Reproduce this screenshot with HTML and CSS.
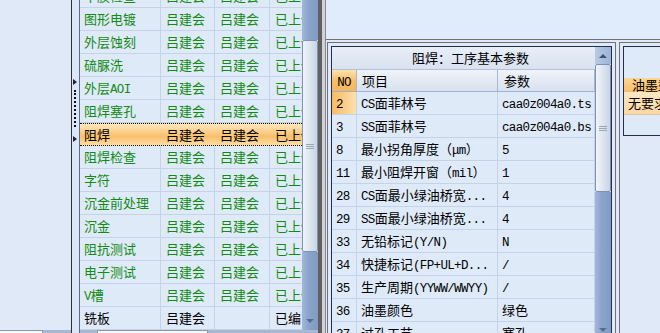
FILE: index.html
```html
<!DOCTYPE html>
<html>
<head>
<meta charset="utf-8">
<link rel="stylesheet" href="styles.css">
</head>
<body>
<div class="app">
  <div class="collapsed">
    <div class="tabstrip"><span class="tab tab-a"></span></div>
  </div>
  <div class="splitter">
    <span class="arrow"></span>
    <span class="grip"></span>
    <span class="arrow arrow2"></span>
  </div>
  <div class="gridcol">
    <div class="gridarea">
      <div class="rows1">
        <div class="row1 first"><span class="cell c1">干膜检查</span><span class="cell c2">吕建会</span><span class="cell c3">吕建会</span><span class="cell c4">已上传</span></div>
        <div class="row1"><span class="cell c1">图形电镀</span><span class="cell c2">吕建会</span><span class="cell c3">吕建会</span><span class="cell c4">已上传</span></div>
        <div class="row1"><span class="cell c1">外层蚀刻</span><span class="cell c2">吕建会</span><span class="cell c3">吕建会</span><span class="cell c4">已上传</span></div>
        <div class="row1"><span class="cell c1">硫脲洗</span><span class="cell c2">吕建会</span><span class="cell c3">吕建会</span><span class="cell c4">已上传</span></div>
        <div class="row1"><span class="cell c1">外层<span class="lat">AOI</span></span><span class="cell c2">吕建会</span><span class="cell c3">吕建会</span><span class="cell c4">已上传</span></div>
        <div class="row1"><span class="cell c1">阻焊塞孔</span><span class="cell c2">吕建会</span><span class="cell c3">吕建会</span><span class="cell c4">已上传</span></div>
        <div class="row1 sel"><span class="cell c1">阻焊</span><span class="cell c2">吕建会</span><span class="cell c3">吕建会</span><span class="cell c4">已上传</span></div>
        <div class="row1"><span class="cell c1">阻焊检查</span><span class="cell c2">吕建会</span><span class="cell c3">吕建会</span><span class="cell c4">已上传</span></div>
        <div class="row1"><span class="cell c1">字符</span><span class="cell c2">吕建会</span><span class="cell c3">吕建会</span><span class="cell c4">已上传</span></div>
        <div class="row1"><span class="cell c1">沉金前处理</span><span class="cell c2">吕建会</span><span class="cell c3">吕建会</span><span class="cell c4">已上传</span></div>
        <div class="row1"><span class="cell c1">沉金</span><span class="cell c2">吕建会</span><span class="cell c3">吕建会</span><span class="cell c4">已上传</span></div>
        <div class="row1"><span class="cell c1">阻抗测试</span><span class="cell c2">吕建会</span><span class="cell c3">吕建会</span><span class="cell c4">已上传</span></div>
        <div class="row1"><span class="cell c1">电子测试</span><span class="cell c2">吕建会</span><span class="cell c3">吕建会</span><span class="cell c4">已上传</span></div>
        <div class="row1"><span class="cell c1"><span class="lat">V</span>槽</span><span class="cell c2">吕建会</span><span class="cell c3">吕建会</span><span class="cell c4">已上传</span></div>
        <div class="row1 plain"><span class="cell c1">铣板</span><span class="cell c2">吕建会</span><span class="cell c3"></span><span class="cell c4">已编写</span></div>
      </div>
      <div class="vscroll vs1">
        <div class="track t-top"></div>
        <div class="thumb thumb1"><span class="gripl"></span></div>
        <div class="track t-rest"><span class="down"></span></div>
      </div>
    </div>
    <div class="tabstrip"><span class="tab tab-b"></span></div>
  </div>
  <div class="sep"></div>
  <div class="right">
    <div class="topband"></div>
    <div class="panels">
      <div class="frame mid">
        <div class="box midbox">
          <div class="tbl">
            <div class="ttl">阻焊：工序基本参数</div>
            <div class="hdr"><span class="cell n no-sel"><span class="lat">NO</span></span><span class="cell k">项目</span><span class="cell v">参数</span></div>
            <div class="r2"><span class="cell n no-sel"><span class="lat">2</span></span><span class="cell k"><span class="lat">CS</span>面菲林号</span><span class="cell v"><span class="lat">caa0z004a0.ts</span></span></div>
            <div class="r2"><span class="cell n"><span class="lat">3</span></span><span class="cell k"><span class="lat">SS</span>面菲林号</span><span class="cell v"><span class="lat">caa0z004a0.bs</span></span></div>
            <div class="r2"><span class="cell n"><span class="lat">8</span></span><span class="cell k">最小拐角厚度（<span class="lat">μm</span>）</span><span class="cell v"><span class="lat">5</span></span></div>
            <div class="r2"><span class="cell n"><span class="lat">11</span></span><span class="cell k">最小阻焊开窗（<span class="lat">mil</span>）</span><span class="cell v"><span class="lat">1</span></span></div>
            <div class="r2"><span class="cell n"><span class="lat">28</span></span><span class="cell k"><span class="lat">CS</span>面最小绿油桥宽<span class="lat">...</span></span><span class="cell v"><span class="lat">4</span></span></div>
            <div class="r2"><span class="cell n"><span class="lat">29</span></span><span class="cell k"><span class="lat">SS</span>面最小绿油桥宽<span class="lat">...</span></span><span class="cell v"><span class="lat">4</span></span></div>
            <div class="r2"><span class="cell n"><span class="lat">33</span></span><span class="cell k">无铅标记<span class="lat">(Y/N)</span></span><span class="cell v"><span class="lat">N</span></span></div>
            <div class="r2"><span class="cell n"><span class="lat">34</span></span><span class="cell k">快捷标记<span class="lat">(FP+UL+D...</span></span><span class="cell v"><span class="lat">/</span></span></div>
            <div class="r2"><span class="cell n"><span class="lat">35</span></span><span class="cell k">生产周期<span class="lat">(YYWW/WWYY)</span></span><span class="cell v"><span class="lat">/</span></span></div>
            <div class="r2"><span class="cell n"><span class="lat">36</span></span><span class="cell k">油墨颜色</span><span class="cell v">绿色</span></div>
            <div class="r2"><span class="cell n"><span class="lat">37</span></span><span class="cell k">过孔工艺</span><span class="cell v">塞孔</span></div>
          </div>
          <div class="vscroll vs2">
            <div class="upbtn"><span class="up"></span></div>
            <div class="thumb thumb2"><span class="gripl"></span></div>
            <div class="track t-rest2"><span class="down"></span></div>
          </div>
        </div>
      </div>
      <div class="frame rt">
        <div class="box rtbox">
          <div class="rttitle"></div>
          <div class="rthdr">油墨型号</div>
          <div class="rtrow">无要求</div>
        </div>
      </div>
    </div>
  </div>
</div>
</body>
</html>
```
FILE: styles.css
```css
* { box-sizing: border-box; margin: 0; padding: 0; }
html, body { width: 660px; height: 333px; overflow: hidden; }
body {
  font-family: "Noto Sans CJK SC", "Noto Sans", sans-serif;
  font-size: 13px;
  line-height: 1;
  color: #000;
  background: #dfe9f8;
}
.lat {
  font-family: "Liberation Mono", "DejaVu Sans Mono", monospace;
  font-size: 12.5px;
  letter-spacing: -0.65px;
}
.app { display: flex; height: 333px; width: 660px; }

/* collapsed left panel */
.collapsed {
  width: 71px;
  flex: none;
  display: flex;
  flex-direction: column;
  justify-content: flex-end;
  background: #dfe9f8;
}
.tabstrip { height: 3px; flex: none; background: #a7b8d2; display: flex; }
.tab { display: block; height: 3px; background: #f5f8fc; border-top: 1px solid #8d98a8; border-right: 1px solid #8d98a8; border-left: 1px solid #8d98a8; }
.tab-a { width: 43px; border-left: none; }
.tab-b { width: 111px; margin-left: 17px; }

/* splitter */
.splitter {
  width: 9px;
  flex: none;
  border-left: 1px solid #2c2f36;
  border-right: 1px solid #5b6c8c;
  background: #dbe6f6;
  display: flex;
  flex-direction: column;
  align-items: flex-start;
  padding: 79px 0 0 1px;
}
.arrow {
  width: 0; height: 0;
  border-left: 4px solid #1d2330;
  border-top: 3px solid transparent;
  border-bottom: 3px solid transparent;
}
.grip {
  width: 2px;
  height: 37px;
  margin: 5px 0 0 1px;
  border-left: 2px dotted #111;
}
.arrow2 { margin-top: 9px; }

/* left grid */
.gridcol { width: 238px; flex: none; display: flex; flex-direction: column; }
.gridarea { height: 330px; display: flex; overflow: hidden; }
.rows1 { width: 222px; flex: none; overflow: hidden; background: #dfeaf9; }
.row1 {
  height: 23px;
  display: flex;
  border-bottom: 1px solid #c4d3e8;
  color: #148a14;
  white-space: nowrap;
}
.row1.first { margin-top: -15px; }
.row1 .cell { display: block; height: 22px; line-height: 22px; overflow: hidden; border-right: 1px solid #c4d3e8; flex: none; }
.c1 { width: 81px; padding-left: 4px; }
.c2 { width: 54px; padding-left: 5px; }
.c3 { width: 55px; padding-left: 5px; }
.row1 .c4 { width: 32px; padding-left: 5px; border-right: none; }
.row1.sel {
  color: #000;
  background: linear-gradient(#fde7bf, #fbc97f 45%, #f9c06d 60%, #fcdca4);
  border-top: 1px dotted #111;
  border-bottom: 1px dotted #111;
}
.row1.sel .cell { border-right-color: transparent; height: 21px; line-height: 21px; }
.row1.plain { color: #000; }

/* scrollbars */
.vscroll { width: 16px; flex: none; display: flex; flex-direction: column; }
.track { background: linear-gradient(to right, #a2b8d9, #8aa4cb 40%, #809bc4); }
.t-top { height: 40px; flex: none; }
.thumb {
  border: 1px solid #7d93b6;
  border-radius: 2px;
  background: linear-gradient(to right, #f1f4f9, #dde5ef 50%, #c9d4e4);
  display: flex;
  align-items: center;
  justify-content: center;
}
.thumb1 { height: 212px; flex: none; }
.gripl {
  width: 8px; height: 5px;
  border-top: 1px solid #98a6ba;
  border-bottom: 1px solid #98a6ba;
  background: linear-gradient(transparent 1px, #98a6ba 1px, #98a6ba 2px, transparent 2px);
}
.t-rest { flex: 1; display: flex; flex-direction: column; justify-content: flex-end; align-items: center; padding-bottom: 7px; }
.down {
  width: 0; height: 0;
  border-top: 4px solid #5b6d8d;
  border-left: 4px solid transparent;
  border-right: 4px solid transparent;
}
.up {
  width: 0; height: 0;
  border-bottom: 4px solid #3f5275;
  border-left: 4px solid transparent;
  border-right: 4px solid transparent;
}

/* separator */
.sep {
  width: 7px;
  flex: none;
  background: #606060;
  border-right: 3px solid #cfd3d9;
}

/* right region */
.right {
  flex: 1;
  min-width: 0;
  overflow: hidden;
  display: flex;
  flex-direction: column;
  border-left: 1px solid #8a8a8a;
  background: #dfe9f8;
}
.topband {
  height: 40px;
  flex: none;
  background: #e0ebfb;
  border-bottom: 1px solid #727272;
}
.panels {
  flex: 1;
  display: flex;
  gap: 3px;
  padding: 2px 0 0 1px;
  overflow: hidden;
}
.frame {
  border: 1px solid #717171;
  padding: 3px;
  flex: none;
}
.mid { width: 289px; height: 300px; }
.rt { width: 60px; height: 300px; }
.box {
  border: 1px solid #24304b;
  background: #dfeaf9;
  overflow: hidden;
}
.midbox { display: flex; height: 292px; }
.tbl { width: 263px; flex: none; }
.ttl {
  height: 23px;
  line-height: 22px;
  text-align: center;
  padding-left: 14px;
  border-bottom: 1px solid #b3c2d8;
  background: linear-gradient(#e8eef8, #d9e2ef);
}
.hdr, .r2 { display: flex; height: 23px; border-bottom: 1px solid #c4d3e8; white-space: nowrap; }
.hdr { height: 22px; border-bottom-color: #9fb2cd; background: linear-gradient(#f0f4fa, #d8e1ee); }
.hdr .cell, .r2 .cell { display: block; height: 22px; line-height: 22px; overflow: hidden; flex: none; border-right: 1px solid #c4d3e8; }
.hdr .cell { height: 21px; line-height: 21px; border-right-color: #a8b8cf; }
.n { width: 25px; padding-left: 4px; }
.hdr .n { text-align: center; padding-left: 0; }
.k { width: 141px; padding-left: 4px; }
.v { width: 97px; padding-left: 4px; }
.hdr .k { padding-left: 5px; }
.hdr .v { padding-left: 6px; }
.no-sel { background: linear-gradient(#fde2ad, #f8bd67 55%, #f7b75b); }
.r2 .no-sel { background: linear-gradient(to right, #f8bb62, #fbd08f 60%, #fde0b0); }

.vs2 { height: 100%; }
.upbtn {
  height: 17px;
  flex: none;
  background: linear-gradient(to right, #b8cae3, #9db4d7);
  display: flex;
  align-items: center;
  justify-content: center;
}
.thumb2 { height: 128px; flex: none; }
.t-rest2 { flex: 1; display: flex; flex-direction: column; justify-content: flex-end; align-items: center; padding-bottom: 5px; }

.rtbox { height: 90px; width: 100px; }
.rttitle { height: 31px; }
.rthdr {
  height: 14px;
  line-height: 14px;
  padding-left: 8px;
  white-space: nowrap;
  background: linear-gradient(#fbd595, #f7bd69);
}
.rtrow {
  height: 23px;
  line-height: 22px;
  padding-left: 4px;
  white-space: nowrap;
  background: linear-gradient(#fde7c6, #fbd7a2);
  border-bottom: 1px solid #d9c6a8;
}
```
